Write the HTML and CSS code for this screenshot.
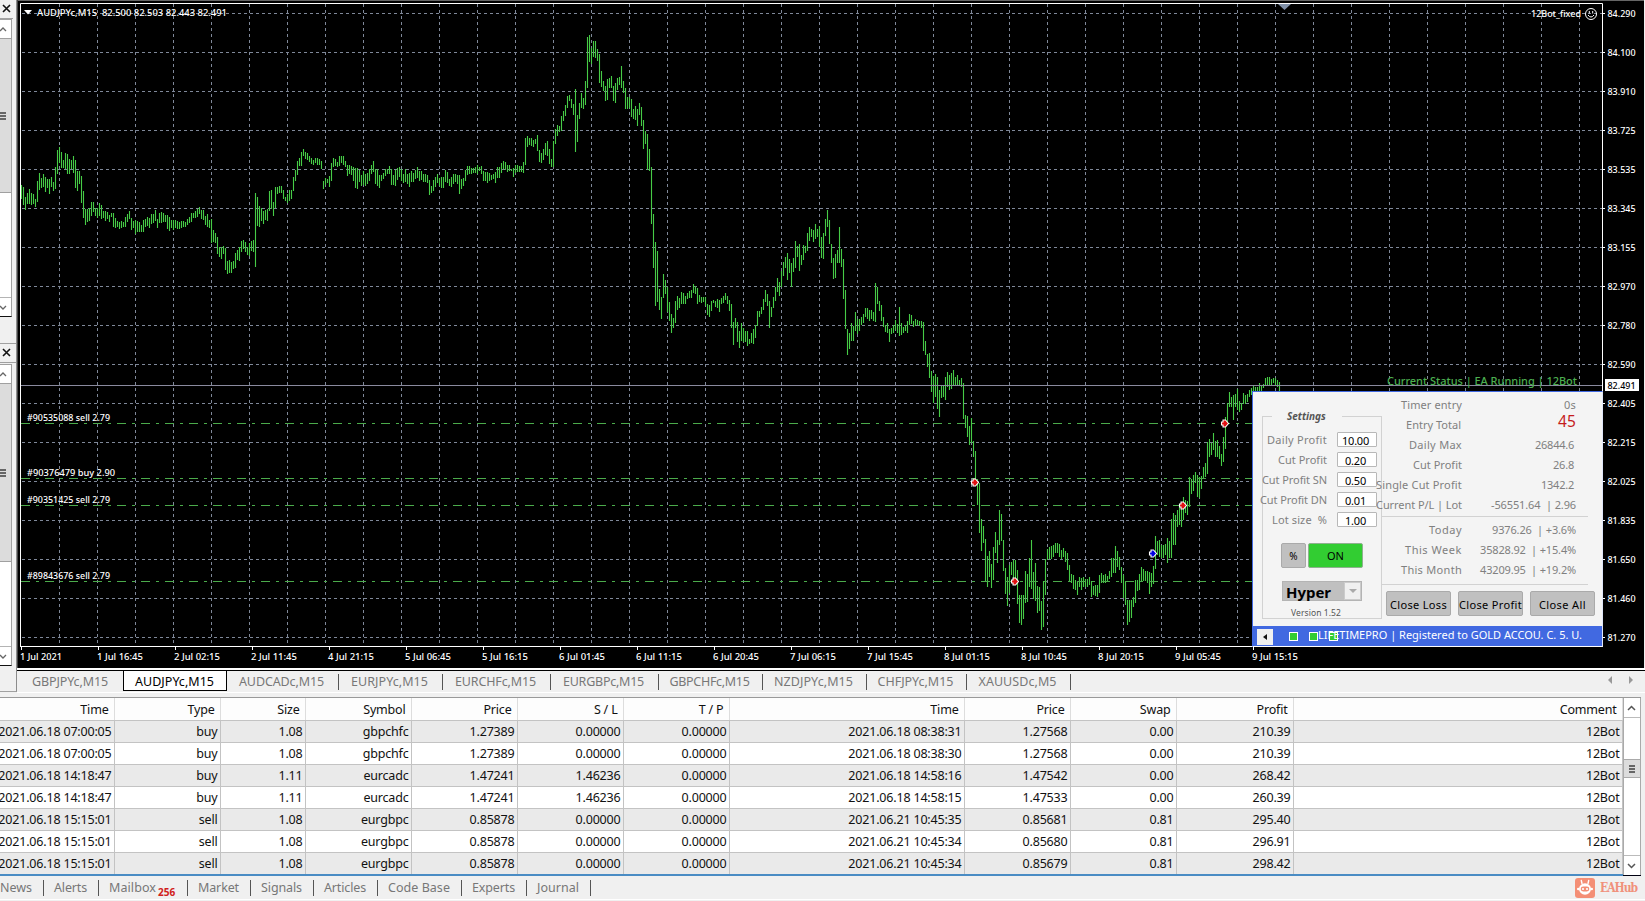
FILE: index.html
```html
<!DOCTYPE html>
<html lang="en">
<head>
    <meta charset="UTF-8">
    <meta name="viewport" content="width=device-width, initial-scale=1.0">
    <title>AUDJPYc,M15</title>
    <link rel="stylesheet" href="styles.css">
</head>
<body>
    <div class="workspace">
        <div class="side">
            <div class="dock dock-top">
                <div class="dock-title"><svg width="9" height="9" viewBox="0 0 9 9"><path d="M1 1L8 8M8 1L1 8"/></svg></div>
                <div class="side-scroll">
                    <div class="side-btn"><svg width="7" height="5" viewBox="0 0 7 5"><path d="M0 4L3 1L6 4"/></svg></div>
                    <div class="side-thumb"><i class="grip"></i></div>
                    <div class="side-track"></div>
                    <div class="side-btn"><svg width="7" height="5" viewBox="0 0 7 5"><path d="M0 1L3 4L6 1"/></svg></div>
                </div>
            </div>
            <div class="dock dock-bottom">
                <div class="dock-title"><svg width="9" height="9" viewBox="0 0 9 9"><path d="M1 1L8 8M8 1L1 8"/></svg></div>
                <div class="side-scroll">
                    <div class="side-btn"><svg width="7" height="5" viewBox="0 0 7 5"><path d="M0 4L3 1L6 4"/></svg></div>
                    <div class="side-thumb"><i class="grip"></i></div>
                    <div class="side-track"></div>
                    <div class="side-btn"><svg width="7" height="5" viewBox="0 0 7 5"><path d="M0 1L3 4L6 1"/></svg></div>
                </div>
            </div>
        </div>

        <div class="main">
            <div class="chart">
                <svg id="chart" width="1627" height="668" viewBox="17 0 1627 668"></svg>

                <div class="ea-panel">
                    <div class="ea-body">
                        <div class="ea-left">
                            <div class="group-title"><span class="rule-short"></span><b>Settings</b><span class="rule"></span></div>
                            <div class="group">
                                <div class="field"><span class="field-label"><span class="fit" data-w="60">Daily Profit</span></span><span class="input"><span class="fit" data-w="27">10.00</span></span></div>
                                <div class="field"><span class="field-label"><span class="fit" data-w="49">Cut Profit</span></span><span class="input"><span class="fit" data-w="21">0.20</span></span></div>
                                <div class="field"><span class="field-label"><span class="fit" data-w="65">Cut Profit SN</span></span><span class="input"><span class="fit" data-w="21">0.50</span></span></div>
                                <div class="field"><span class="field-label"><span class="fit" data-w="67">Cut Profit DN</span></span><span class="input"><span class="fit" data-w="21">0.01</span></span></div>
                                <div class="field"><span class="field-label"><span class="fit" data-w="55">Lot size&nbsp; %</span></span><span class="input"><span class="fit" data-w="21">1.00</span></span></div>
                                <div class="switches"><span class="btn btn-percent">%</span><span class="btn btn-on">ON</span></div>
                                <div class="mode"><b><span class="fit" data-w="45">Hyper</span></b><span class="mode-arrow"></span></div>
                                <div class="version"><span class="fit" data-w="50">Version 1.52</span></div>
                            </div>
                        </div>
                        <div class="ea-right">
                            <div class="stat"><span class="stat-label"><span class="fit" data-w="61">Timer entry</span></span><span class="stat-value"><span class="fit" data-w="12">0s</span></span></div>
                            <div class="stat"><span class="stat-label shift"><span class="fit" data-w="55">Entry Total</span></span><span class="stat-value big"><span class="fit" data-w="18">45</span></span></div>
                            <div class="stat"><span class="stat-label"><span class="fit" data-w="53">Daily Max</span></span><span class="stat-value short"><span class="fit" data-w="39">26844.6</span></span></div>
                            <div class="stat"><span class="stat-label"><span class="fit" data-w="49">Cut Profit</span></span><span class="stat-value short"><span class="fit" data-w="21">26.8</span></span></div>
                            <div class="stat"><span class="stat-label"><span class="fit" data-w="86">Single Cut Profit</span></span><span class="stat-value short"><span class="fit" data-w="33">1342.2</span></span></div>
                            <div class="stat"><span class="stat-label"><span class="fit" data-w="86">Current P/L | Lot</span></span><span class="stat-value"><span class="fit" data-w="85">-56551.64&nbsp; | 2.96</span></span></div>
                            <div class="periods">
                                <div class="stat"><span class="stat-label"><span class="fit" data-w="33">Today</span></span><span class="stat-value"><span class="fit" data-w="84">9376.26&nbsp; | +3.6%</span></span></div>
                                <div class="stat"><span class="stat-label"><span class="fit" data-w="57">This Week</span></span><span class="stat-value"><span class="fit" data-w="96">35828.92&nbsp; | +15.4%</span></span></div>
                                <div class="stat"><span class="stat-label"><span class="fit" data-w="61">This Month</span></span><span class="stat-value"><span class="fit" data-w="96">43209.95&nbsp; | +19.2%</span></span></div>
                            </div>
                            <div class="actions">
                                <span class="btn"><span class="fit" data-w="57">Close Loss</span></span>
                                <span class="btn"><span class="fit" data-w="63">Close Profit</span></span>
                                <span class="btn"><span class="fit" data-w="47">Close All</span></span>
                            </div>
                        </div>
                    </div>
                    <div class="ea-footer">
                        <span class="back"></span>
                        <span class="led"></span><span class="led"></span><span class="led"></span>
                        <span class="licence"><span class="fit" data-w="264">LIFETIMEPRO | Registered to GOLD ACCOU. C. 5. U.</span></span>
                    </div>
                </div>
            </div>

            <div class="chart-tabs">
                <span class="chart-tab" style="width:106px"><span class="fit" data-w="76">GBPJPYc,M15</span></span>
                <span class="chart-tab active" style="width:104px"><span class="fit" data-w="79">AUDJPYc,M15</span></span>
                <span class="chart-tab" style="width:112px"><span class="fit" data-w="85">AUDCADc,M15</span></span>
                <span class="chart-tab" style="width:104px"><span class="fit" data-w="77">EURJPYc,M15</span></span>
                <span class="chart-tab" style="width:108px"><span class="fit" data-w="81">EURCHFc,M15</span></span>
                <span class="chart-tab" style="width:108px"><span class="fit" data-w="81">EURGBPc,M15</span></span>
                <span class="chart-tab" style="width:104px"><span class="fit" data-w="80">GBPCHFc,M15</span></span>
                <span class="chart-tab" style="width:104px"><span class="fit" data-w="79">NZDJPYc,M15</span></span>
                <span class="chart-tab" style="width:100px"><span class="fit" data-w="76">CHFJPYc,M15</span></span>
                <span class="chart-tab" style="width:104px"><span class="fit" data-w="78">XAUUSDc,M5</span></span>
                <span class="tab-arrows"><i class="arrow-left"></i><i class="arrow-right"></i></span>
            </div>
        </div>
    </div>

    <div class="history">
        <table class="orders">
            <colgroup>
                <col class="c-open"><col class="c-std"><col class="c-size"><col class="c-std"><col class="c-std"><col class="c-std">
                <col class="c-std"><col class="c-close"><col class="c-std"><col class="c-swap"><col class="c-profit"><col class="c-comment">
            </colgroup>
            <thead>
                <tr><th>Time</th><th>Type</th><th>Size</th><th>Symbol</th><th>Price</th><th>S / L</th><th>T / P</th><th>Time</th><th>Price</th><th>Swap</th><th>Profit</th><th>Comment</th></tr>
            </thead>
            <tbody>
                <tr><td>2021.06.18 07:00:05</td><td>buy</td><td>1.08</td><td>gbpchfc</td><td>1.27389</td><td>0.00000</td><td>0.00000</td><td>2021.06.18 08:38:31</td><td>1.27568</td><td>0.00</td><td>210.39</td><td>12Bot</td></tr>
                <tr><td>2021.06.18 07:00:05</td><td>buy</td><td>1.08</td><td>gbpchfc</td><td>1.27389</td><td>0.00000</td><td>0.00000</td><td>2021.06.18 08:38:30</td><td>1.27568</td><td>0.00</td><td>210.39</td><td>12Bot</td></tr>
                <tr><td>2021.06.18 14:18:47</td><td>buy</td><td>1.11</td><td>eurcadc</td><td>1.47241</td><td>1.46236</td><td>0.00000</td><td>2021.06.18 14:58:16</td><td>1.47542</td><td>0.00</td><td>268.42</td><td>12Bot</td></tr>
                <tr><td>2021.06.18 14:18:47</td><td>buy</td><td>1.11</td><td>eurcadc</td><td>1.47241</td><td>1.46236</td><td>0.00000</td><td>2021.06.18 14:58:15</td><td>1.47533</td><td>0.00</td><td>260.39</td><td>12Bot</td></tr>
                <tr><td>2021.06.18 15:15:01</td><td>sell</td><td>1.08</td><td>eurgbpc</td><td>0.85878</td><td>0.00000</td><td>0.00000</td><td>2021.06.21 10:45:35</td><td>0.85681</td><td>0.81</td><td>295.40</td><td>12Bot</td></tr>
                <tr><td>2021.06.18 15:15:01</td><td>sell</td><td>1.08</td><td>eurgbpc</td><td>0.85878</td><td>0.00000</td><td>0.00000</td><td>2021.06.21 10:45:34</td><td>0.85680</td><td>0.81</td><td>296.91</td><td>12Bot</td></tr>
                <tr><td>2021.06.18 15:15:01</td><td>sell</td><td>1.08</td><td>eurgbpc</td><td>0.85878</td><td>0.00000</td><td>0.00000</td><td>2021.06.21 10:45:34</td><td>0.85679</td><td>0.81</td><td>298.42</td><td>12Bot</td></tr>
            </tbody>
        </table>
        <div class="scrollbar">
            <div class="scroll-btn"><svg width="9" height="6" viewBox="0 0 9 6"><path d="M1 5L4.5 1.5L8 5"/></svg></div>
            <div class="scroll-gap"></div>
            <div class="scroll-thumb"><i class="grip"></i></div>
            <div class="scroll-rest"></div>
            <div class="scroll-btn"><svg width="9" height="6" viewBox="0 0 9 6"><path d="M1 1L4.5 4.5L8 1"/></svg></div>
        </div>
    </div>

    <div class="terminal-tabs">
        <span class="term-tab" style="width:44px"><span class="fit" data-w="32">News</span></span>
        <span class="term-tab" style="width:55px"><span class="fit" data-w="33">Alerts</span></span>
        <span class="term-tab" style="width:89px"><span class="fit" data-w="47">Mailbox</span><b class="count">256</b></span>
        <span class="term-tab" style="width:63px"><span class="fit" data-w="41">Market</span></span>
        <span class="term-tab" style="width:63px"><span class="fit" data-w="41">Signals</span></span>
        <span class="term-tab" style="width:64px"><span class="fit" data-w="42">Articles</span></span>
        <span class="term-tab" style="width:84px"><span class="fit" data-w="62">Code Base</span></span>
        <span class="term-tab" style="width:65px"><span class="fit" data-w="43">Experts</span></span>
        <span class="term-tab" style="width:64px"><span class="fit" data-w="42">Journal</span></span>
        <span class="brand">
            <svg width="20" height="20" viewBox="0 0 20 20">
                <rect width="20" height="20" rx="3" fill="#f48f76"/>
                <path d="M7 5.5L6.3 2.5M13 5.5L13.7 2.5" stroke="#fff" stroke-width="1.4" stroke-linecap="round"/>
                <ellipse cx="10" cy="11" rx="6" ry="5.8" fill="#fff"/>
                <circle cx="3.3" cy="11" r="1.3" fill="#fff"/>
                <circle cx="16.7" cy="11" r="1.3" fill="#fff"/>
                <rect x="5.7" y="8.6" width="8.6" height="4.8" rx="2.4" fill="#f48f76"/>
                <circle cx="8" cy="11" r="1.1" fill="#fff"/>
                <circle cx="12" cy="11" r="1.1" fill="#fff"/>
            </svg>
            <b><span class="fit" data-w="37">EAHub</span></b>
        </span>
    </div>

    <script src="script.js"></script>
</body>
</html>
```

FILE: styles.css
```css
* {
    box-sizing: border-box;
}

body {
    margin: 0;
    width: 1645px;
    height: 901px;
    overflow: hidden;
    display: flex;
    flex-direction: column;
    background: #f0f0f0;
    font-family: "Noto Sans", "Open Sans", sans-serif;
    font-size: 12.5px;
    color: #111;
}

.fit {
    white-space: nowrap;
}

.workspace {
    display: flex;
    height: 697px;
}

/* left docked windows */
.side {
    width: 17px;
    height: 692px;
    flex: none;
    border-right: 1px solid #8c8c8c;
    border-bottom: 1px solid #a0a0a0;
}

.dock {
    display: flex;
    flex-direction: column;
    width: 13px;
}

.dock-top {
    height: 343px;
}

.dock-title {
    height: 19px;
    flex: none;
    border-bottom: 1px solid #a0a0a0;
    padding: 4px 0 0 2px;
}

.dock-bottom .dock-title {
    height: 20px;
    width: 16px;
    border-top: 1px solid #a0a0a0;
}

.dock-title svg {
    display: block;
}

.side svg path {
    fill: none;
    stroke: #111;
    stroke-width: 1.6;
}

.side .side-btn path {
    stroke: #666;
    stroke-width: 1.3;
}

.side-scroll {
    display: flex;
    flex-direction: column;
    width: 12px;
    background: #fff;
    border-top: 1px solid #a0a0a0;
    border-right: 1px solid #a0a0a0;
    border-bottom: 1px solid #111;
}

.dock-top .side-scroll {
    height: 298px;
}

.dock-bottom .side-scroll {
    height: 302px;
    margin-top: 1px;
}

.side-btn {
    height: 18px;
    flex: none;
    display: flex;
    align-items: center;
}

.side-thumb {
    height: 155px;
    flex: none;
    background: #dcdcdc;
    border-top: 1px solid #a0a0a0;
    border-bottom: 1px solid #a0a0a0;
    display: flex;
    align-items: center;
}

.dock-bottom .side-thumb {
    height: 179px;
}

.side-track {
    flex: 1;
    border-bottom: 1px solid #b4b4b4;
}

.grip {
    width: 6px;
    height: 8px;
    border-top: 2px solid #666;
    border-bottom: 2px solid #666;
    background: linear-gradient(#0000 1px, #666 1px, #666 3px, #0000 3px);
}

/* chart */
.main {
    width: 1628px;
    display: flex;
    flex-direction: column;
}

.chart {
    position: relative;
    height: 670px;
    border-bottom: 2px solid #fff;
}

.chart > svg {
    display: block;
    background: #000;
    font-size: 9.4px;
    font-weight: 500;
}

.grid {
    stroke: #7f8899;
    stroke-dasharray: 3 3;
}

.bars {
    stroke: #46cb46;
    stroke-width: 1.1;
    fill: none;
}

.order-line {
    stroke: #4bab4b;
    stroke-dasharray: 9 6 3 6;
}

.frame {
    stroke: #fff;
    fill: none;
}

/* expert advisor window floating over the chart */
.ea-panel {
    position: absolute;
    left: 1235px;
    top: 391px;
    width: 351px;
    height: 256px;
    background: #f4f4f4;
    border: 1px solid #4169e1;
    border-right-color: #dfe5f8;
    border-bottom-color: #fff;
    font-size: 11px;
    color: #808080;
}

.ea-body {
    display: flex;
    height: 234px;
}

.ea-left {
    width: 129px;
    padding-left: 9px;
    padding-top: 16px;
    flex: none;
}

.group-title {
    height: 16px;
    display: flex;
    align-items: center;
    color: #555;
    font-style: italic;
    font-size: 10px;
}

.rule-short,
.rule {
    height: 1px;
    background: #d2d2d2;
    margin-top: 1px;
}

.rule-short {
    width: 10px;
    margin-right: 15px;
}

.rule {
    width: 40px;
    margin-left: auto;
}

.group {
    border: 1px solid #d2d2d2;
    border-top: 0;
    height: 203px;
    margin-top: -8px;
    padding-top: 16px;
}

.field {
    display: flex;
    height: 20px;
    justify-content: flex-end;
    padding-right: 4px;
}

.field-label {
    display: flex;
    justify-content: flex-end;
    width: 60px;
    line-height: 15px;
    margin-right: 10px;
}

.input {
    width: 40px;
    height: 15px;
    background: #fff;
    border: 1px solid #b8b8b8;
    border-radius: 1px;
    color: #000;
    text-align: center;
    line-height: 15px;
    padding-right: 3px;
}

.btn {
    display: flex;
    align-items: center;
    justify-content: center;
    height: 25px;
    background: #c0c0c0;
    border: 1px solid #aaa;
    border-radius: 2px;
    color: #000;
}

.switches {
    display: flex;
    gap: 2px;
    margin: 11px 0 0 18px;
}

.btn-percent {
    width: 25px;
    font-size: 10px;
}

.btn-on {
    width: 55px;
    background: #32cd32;
    border-color: #8fb08f;
}

.mode {
    display: flex;
    align-items: center;
    width: 80px;
    height: 20px;
    margin: 13px 0 0 19px;
    padding-left: 3px;
    background: #c0c0c0;
    border: 1px solid #b4b4b4;
    color: #000;
    font-size: 15px;
}

.mode b {
    padding-top: 1px;
}

.mode-arrow {
    width: 17px;
    height: 18px;
    margin-left: auto;
    background: #f0f0f0;
    border: 1px solid #ccc;
    display: flex;
    align-items: center;
    justify-content: center;
}

.mode-arrow::before {
    content: "";
    border: 4px solid transparent;
    border-top-color: #aaa;
    border-bottom: 0;
}

.version {
    margin: 6px 0 0 28px;
    font-size: 8.5px;
    line-height: 12px;
    color: #555;
}

.ea-right {
    width: 214px;
    padding-top: 2px;
}

.stat {
    display: flex;
    height: 20px;
    line-height: 21px;
}

.stat-label {
    display: flex;
    justify-content: flex-end;
    width: 80px;
}

.shift {
    padding-right: 1px;
}

.stat-value {
    display: flex;
    justify-content: flex-end;
    width: 114px;
}

.short {
    padding-right: 2px;
}

.big {
    font-size: 15.5px;
    line-height: 14px;
    color: #c51c1c;
}

.periods {
    width: 206px;
    height: 69px;
    margin-top: 2px;
    padding-top: 2px;
    border-top: 1px solid #d2d2d2;
    border-bottom: 1px solid #d2d2d2;
}

.actions {
    display: flex;
    gap: 7px;
    margin: 6px 0 0 4px;
}

.actions .btn {
    width: 65px;
    flex: none;
    padding-top: 1px;
}

.ea-footer {
    display: flex;
    align-items: center;
    height: 20px;
    padding: 1px 0 0 4px;
    background: #4169e1;
    color: #fff;
}

.back {
    width: 16px;
    height: 16px;
    margin-right: 16px;
    background: #f0f0f0;
    display: flex;
    align-items: center;
    justify-content: center;
}

.back::before {
    content: "";
    border: 3px solid transparent;
    border-right: 4px solid #111;
    border-left: 0;
}

.led {
    width: 9px;
    height: 9px;
    margin-right: 11px;
    background: #32cd32;
    border: 1px solid #fff;
}

.licence {
    margin-left: -31px;
    margin-top: -5px;
}

/* chart tabs */
.chart-tabs {
    display: flex;
    height: 23px;
    border-top: 1px solid #000;
    border-bottom: 1px solid #fff;
    width: 1628px;
    color: #777;
}

.chart-tab {
    flex: none;
    position: relative;
    height: 20px;
    display: flex;
    align-items: center;
    justify-content: center;
    padding-top: 1px;
}

.chart-tab:nth-child(n+3) {
    padding-right: 3px;
}

.chart-tab:nth-child(n+3)::after {
    content: "";
    position: absolute;
    right: 0;
    top: 3px;
    width: 1px;
    height: 16px;
    background: #555;
}

.chart-tab.active {
    background: #fff;
    color: #000;
    border: 1px solid #000;
    border-top: 0;
    padding-right: 1px;
}

.tab-arrows {
    margin-left: auto;
    margin-right: 12px;
    display: flex;
    align-items: center;
    gap: 17px;
    height: 18px;
}

.arrow-left,
.arrow-right {
    border: 4px solid transparent;
}

.arrow-left {
    border-right-color: #999;
    border-left: 0;
}

.arrow-right {
    border-left-color: #999;
    border-right: 0;
}

/* account history */
.history {
    display: flex;
    height: 179px;
    width: 1641px;
    border-top: 1px solid #999;
    border-bottom: 1px solid #001;
}

.orders {
    table-layout: fixed;
    width: 1622px;
    height: 177px;
    border-collapse: collapse;
    letter-spacing: -0.19px;
}

.c-open { width: 114px; }
.c-std { width: 106px; }
.c-size { width: 85px; }
.c-close { width: 235px; }
.c-swap { width: 106px; }
.c-profit { width: 117px; }
.c-comment { width: 329px; }

.orders th,
.orders td {
    padding: 0 2px 0 0;
    height: 22px;
    line-height: 21px;
    text-align: right;
    font-weight: normal;
    white-space: nowrap;
    border-right: 1px solid #c3c3c3;
    border-bottom: 1px solid #c3c3c3;
}

.orders th {
    padding: 2px 5px 0 0;
    line-height: 20px;
    background: #fdfdfd;
    border-right: 1px solid #ddd;
}

.orders td:first-child {
    text-indent: -5px;
}

.orders tbody tr {
    background: #fff;
}

.orders tbody tr:nth-child(odd) {
    background: #eaeaea;
}

.orders tbody tr:last-child td {
    border-bottom: 2px solid #4a8cc4;
}

.scrollbar {
    width: 19px;
    display: flex;
    flex-direction: column;
    background: #fff;
    border: 1px solid #aaa;
    border-top: 0;
    border-bottom: 0;
}

.scroll-btn {
    height: 19px;
    flex: none;
    display: flex;
    align-items: center;
    justify-content: center;
}

.scroll-btn path {
    fill: none;
    stroke: #555;
    stroke-width: 1.5;
}

.scroll-gap {
    height: 42px;
    flex: none;
    border-top: 1px solid #bbb;
}

.scroll-thumb {
    height: 19px;
    flex: none;
    background: #dcdcdc;
    border-top: 1px solid #aaa;
    border-bottom: 1px solid #aaa;
    display: flex;
    align-items: center;
    justify-content: center;
}

.scroll-rest {
    flex: 1;
    border-bottom: 1px solid #bbb;
}

/* terminal tabs */
.terminal-tabs {
    display: flex;
    height: 24px;
    border-bottom: 1px solid #fff;
    color: #777;
}

.term-tab {
    flex: none;
    height: 22px;
    position: relative;
    display: flex;
    align-items: center;
    padding-left: 10px;
}

.term-tab:first-child {
    padding-left: 0;
}

.term-tab::after {
    content: "";
    position: absolute;
    right: 0;
    top: 4px;
    width: 1px;
    height: 16px;
    background: #555;
}

.count {
    color: #d02020;
    font-size: 10px;
    margin: 9px 0 0 2px;
}

.brand {
    margin-left: auto;
    padding-right: 8px;
    display: flex;
    align-items: center;
    gap: 5px;
    color: #f0917b;
    font-family: "DejaVu Serif Condensed", "DejaVu Serif", serif;
    font-size: 12px;
}
```

FILE: script.js
```js
const NS = 'http://www.w3.org/2000/svg';
const chart = document.getElementById('chart');

function add(name, attrs, text) {
    const el = document.createElementNS(NS, name);
    for (const key in attrs) el.setAttribute(key, attrs[key]);
    if (text !== undefined) el.textContent = text;
    chart.appendChild(el);
    return el;
}

function line(x1, y1, x2, y2, cls) {
    return add('line', { x1, y1, x2, y2, class: cls });
}

function label(x, y, text, width, fill) {
    add('text', { x, y, fill: fill || '#fff', textLength: width, lengthAdjust: 'spacingAndGlyphs' }, text);
}

// high-low of every bar, in chart pixels, one bar each 2px
const bars = `185-199 187-205 197-210 193-204 189-204 193-205 194-204 199-207 181-202 173-190 178-188 174-187 177-192 179-188 179-194 177-187 182-191 167-189 150-174 147-163
152-168 160-168 153-169 154-174 159-174 160-169 156-173 160-188 171-191 171-184 176-203 191-218 209-225 209-222 208-221 202-216 202-212 208-216 208-218 203-216
205-219 211-218 211-221 212-219 215-222 213-217 213-227 218-228 221-227 222-229 221-228 222-227 217-227 214-222 211-219 218-230 221-228 220-234 221-232 222-232
225-232 220-232 219-227 217-226 218-228 214-224 214-223 210-221 219-228 213-223 212-223 213-222 215-222 215-229 217-231 220-228 220-230 220-228 221-229 222-229
221-228 221-227 222-227 219-225 217-223 213-222 213-218 211-218 209-217 207-214 210-219 210-220 216-225 214-227 220-228 219-243 230-242 233-243 237-254 247-257
247-259 246-254 248-270 261-274 260-273 262-273 261-269 253-268 250-260 247-261 241-252 240-249 242-252 247-255 243-256 241-251 240-252 193-267 197-226 206-227
208-221 211-224 210-220 209-221 191-211 190-209 202-216 187-208 187-194 186-193 186-193 190-199 197-201 194-203 190-201 190-199 177-191 170-181 161-175 158-166
152-166 149-156 152-159 153-160 156-162 158-164 160-165 158-163 158-165 159-165 161-169 181-189 178-185 179-183 176-187 163-181 158-167 159-166 162-167 156-166
156-163 156-165 161-167 165-176 165-174 166-175 167-181 168-188 168-189 170-182 175-186 171-185 174-186 173-184 169-181 165-174 161-172 169-184 169-186 175-188
175-181 173-179 169-176 169-174 166-174 169-185 175-185 170-186 168-180 167-177 169-181 174-183 169-182 174-184 173-187 171-182 173-182 170-179 167-178 171-181
171-180 174-182 174-182 175-183 180-195 186-193 180-191 177-187 174-183 178-186 177-188 177-188 170-182 172-183 179-186 177-187 174-184 174-182 175-184 175-194
179-189 178-186 170-181 166-175 166-174 168-174 168-173 167-173 165-174 167-171 166-174 171-181 172-181 172-183 173-181 175-180 174-179 172-183 167-178 167-178
163-173 161-169 162-170 165-172 165-171 169-171 168-177 165-173 165-172 166-172 166-172 162-173 138-165 136-147 138-145 138-146 140-147 139-144 135-151 150-162
153-163 149-160 143-155 141-156 149-164 159-167 141-167 129-144 125-136 126-132 116-131 111-121 105-116 96-108 95-101 99-108 104-115 89-152 115-142 103-119
93-108 98-109 81-105 37-88 35-62 48-64 41-57 41-58 49-61 54-83 71-87 81-91 86-101 79-100 78-88 76-88 86-101 83-103 78-90 77-85
66-88 81-93 88-109 97-109 97-108 99-117 109-119 106-120 109-126 103-115 107-126 120-149 131-144 134-170 149-171 167-224 214-268 242-306 251-302 289-310
297-319 274-298 280-294 287-312 302-321 314-333 318-328 301-323 296-310 298-308 292-304 293-304 296-304 293-299 291-298 290-298 284-293 286-294 288-304 295-302
297-303 297-302 297-306 304-315 305-317 301-311 300-303 301-307 299-308 300-312 298-304 296-303 293-300 296-304 300-311 304-328 322-345 318-328 322-342 331-348
323-341 328-342 331-342 331-346 339-344 333-343 329-344 325-338 311-326 311-317 307-314 299-310 290-302 294-306 301-328 307-317 297-308 287-301 278-292 282-296
271-287 262-276 257-268 253-280 259-273 263-287 258-272 241-268 246-257 244-271 255-265 245-260 246-253 233-251 227-241 229-237 230-242 224-239 229-237 226-247
237-258 233-259 219-236 210-227 220-244 244-263 258-279 254-278 250-263 227-263 249-267 259-299 290-329 329-355 333-349 323-341 326-341 312-331 319-334 319-331
317-325 314-323 308-317 308-319 310-321 310-319 312-321 283-322 287-304 301-311 305-321 317-327 325-332 323-333 329-342 328-334 325-333 320-330 324-333 307-336
323-335 327-333 325-331 321-333 314-325 315-324 321-327 319-326 320-325 321-326 321-328 322-351 341-355 354-367 353-378 371-392 376-403 374-397 377-409 390-417
385-398 385-397 377-400 372-387 375-390 373-389 370-385 377-386 375-385 380-385 378-387 383-419 415-428 416-437 426-445 418-443 441-457 451-483 479-505 483-533
519-551 526-543 539-582 556-587 551-577 564-588 547-580 532-553 540-563 510-545 514-541 540-571 568-594 577-606 565-593 562-575 560-580 560-583 570-604 595-623
595-625 595-619 571-603 574-602 558-587 540-589 572-599 563-601 586-613 587-611 601-630 581-627 559-595 549-560 547-559 546-559 545-557 543-553 543-553 544-557
550-559 548-557 551-562 553-570 565-582 574-583 575-589 580-590 581-595 577-587 578-590 577-587 579-587 579-587 577-585 581-597 586-595 585-596 585-597 575-593
573-583 575-583 574-583 576-582 571-579 558-577 558-573 546-573 551-567 557-570 567-583 575-598 581-605 600-625 600-622 600-618 597-607 580-603 580-591 574-590
567-581 569-581 571-581 571-583 572-594 573-587 566-584 536-569 541-555 540-557 545-558 545-558 544-555 538-563 541-558 519-558 513-545 515-545 510-527 507-525
506-527 497-520 500-513 501-515 477-507 479-494 475-491 472-483 475-497 477-498 476-489 467-479 463-477 442-474 439-457 443-455 433-450 441-457 440-457 446-459
454-466 437-462 417-449 403-422 392-407 397-407 395-420 394-407 389-410 401-412 403-410 393-404 395-404 394-402 390-397 388-395 386-393 387-393 387-391 383-392
385-391 384-388 378-386 377-385 377-386 379-386 378-383 378-386 380-387 382-391`.split(/\s+/);

const prices = ['84.290', '84.100', '83.910', '83.725', '83.535', '83.345', '83.155', '82.970', '82.780',
    '82.590', '82.405', '82.215', '82.025', '81.835', '81.650', '81.460', '81.270'];
const times = ['1 Jul 2021', '1 Jul 16:45', '2 Jul 02:15', '2 Jul 11:45', '4 Jul 21:15', '5 Jul 06:45',
    '5 Jul 16:15', '6 Jul 01:45', '6 Jul 11:15', '6 Jul 20:45', '7 Jul 06:15', '7 Jul 15:45',
    '8 Jul 01:15', '8 Jul 10:45', '8 Jul 20:15', '9 Jul 05:45', '9 Jul 15:15'];
const orders = [[423, '#90535088 sell 2.79', 83], [478, '#90376479 buy 2.90', 88], [505, '#90351425 sell 2.79', 83], [581, '#89843676 sell 2.79', 83]];
const deals = [[974, 482, '#e01010'], [1014, 581, '#e01010'], [1182, 505, '#e01010'], [1152, 553, '#0000e0'], [1224, 423, '#e01010']];

// grid
prices.forEach((p, i) => line(22, 13.5 + i * 39, 1602, 13.5 + i * 39, 'grid'));
for (let x = 59.5; x < 1602; x += 38) line(x, 4, x, 646, 'grid');

// bars
add('path', {
    class: 'bars',
    d: bars.map((bar, i) => {
        const [hi, lo] = bar.split('-');
        return `M${21.5 + i * 2} ${hi}V${lo}`;
    }).join('')
});

line(21, 385.5, 1602, 385.5).setAttribute('stroke', '#8a8a9e');
orders.forEach(([y, text, w]) => {
    line(21, y + 0.5, 1602, y + 0.5, 'order-line');
    label(27, y - 2, text, w);
});

deals.forEach(([x, y, fill]) => add('path', {
    d: `M${x - 2.5} ${y - 1}h1.5v-2h2.5l3 3.5l-3 3.5h-2.5v-2h-1.5z`, fill, stroke: '#fff', 'stroke-width': 1.1
}));

// frame and scales
add('rect', { x: 17, y: 0, width: 1627, height: 1, fill: '#666' });
add('rect', { x: 17, y: 0, width: 1, height: 668, fill: '#444' });
add('path', { class: 'frame', d: 'M20.5 647V3.5H1602.5V646.5H20' });
prices.forEach((p, i) => {
    line(1603, 13.5 + i * 39, 1605, 13.5 + i * 39, 'frame');
    label(1607.5, 17 + i * 39, p, 28);
});
times.forEach((t, i) => {
    line(21.5 + i * 77, 647, 21.5 + i * 77, 650, 'frame');
    label(20 + i * 77, 660, t, i ? 46 : 42);
});
add('rect', { x: 1605, y: 379, width: 34, height: 12, fill: '#fff' });
label(1607.5, 389, '82.491', 28, '#000');

// captions
add('path', { d: 'M24 10H32L28 14.5Z', fill: '#fff' });
label(37, 16, 'AUDJPYc,M15\u00a0 82.500 82.503 82.443 82.491', 190);
add('path', { d: 'M1278 4H1291L1284.5 10Z', fill: '#8090a8' });
label(1531, 17, '12Bot_fixed', 50);
add('circle', { cx: 1591, cy: 14, r: 5.5, fill: 'none', stroke: '#fff' });
add('path', { d: 'M1588 15Q1591 19 1594 15M1589.3 11V13.5M1592.7 11V13.5', fill: 'none', stroke: '#fff' });
add('text', { x: 1387, y: 385, fill: '#4caf50', textLength: 190, 'font-size': 11 }, 'Current Status | EA Running | 12Bot');

// spread each caption over its nominal width
document.querySelectorAll('.fit').forEach(el => {
    const gap = (el.dataset.w - el.getBoundingClientRect().width) / el.textContent.length;
    el.style.letterSpacing = gap.toFixed(3) + 'px';
});
```
